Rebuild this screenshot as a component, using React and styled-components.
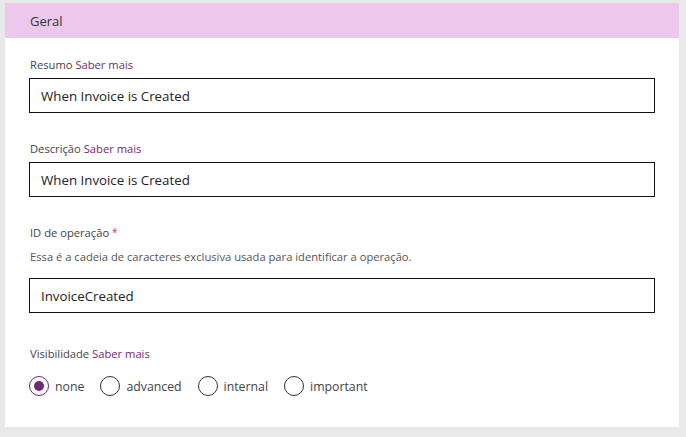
import styled, { createGlobalStyle } from "styled-components";

const GlobalStyle = createGlobalStyle`
  body {
    margin: 0;
    background: #e9e9e9;
    font-family: "Open Sans", "Noto Sans", sans-serif;
  }
`;

const Page = styled.div`
  padding: 3px 7px 10px 5px;
`;

const Card = styled.section`
  background: #fff;
  height: 424px;
  box-sizing: border-box;
`;

const Header = styled.div`
  height: 35px;
  background: #ecc8ec;
  display: flex;
  align-items: center;
  padding-left: 25px;
  font-size: 13px;
  color: #333;
`;

const Body = styled.div`
  padding: 19px 24px 0 24px;
  display: flex;
  flex-direction: column;
`;

const Field = styled.div`
  display: flex;
  flex-direction: column;
  margin-top: ${(p) => p.$top || 0}px;
`;

const Label = styled.div`
  font-size: 11.2px;
  line-height: 16px;
  color: #444;
  padding-left: 1px;
`;

const Link = styled.span`
  color: #742774;
`;

const Required = styled.span`
  color: #d13438;
  font-size: 10px;
  vertical-align: top;
  line-height: 14px;
`;

const Hint = styled.div`
  margin-top: 8px;
  font-size: 11.2px;
  line-height: 16px;
  color: #555;
  padding-left: 1px;
`;

const Input = styled.input`
  margin-top: ${(p) => p.$gap || 5}px;
  height: 35px;
  box-sizing: border-box;
  border: 1px solid #111;
  padding: 0 11px;
  font-family: inherit;
  font-size: 13.3px;
  color: #222;
  outline: none;
`;

const RadioGroup = styled.div`
  margin-top: 14px;
  display: flex;
  align-items: center;
  gap: 16px;
`;

const Option = styled.label`
  display: flex;
  align-items: center;
  gap: 6px;
  font-size: 12.3px;
  color: #444;
`;

const Circle = styled.span`
  width: 20px;
  height: 20px;
  box-sizing: border-box;
  border-radius: 50%;
  border: 1px solid ${(p) => (p.$checked ? "#742774" : "#333")};
  display: flex;
  align-items: center;
  justify-content: center;

  &::after {
    content: "";
    width: 10px;
    height: 10px;
    border-radius: 50%;
    background: ${(p) => (p.$checked ? "#742774" : "transparent")};
  }
`;

const visibility = ["none", "advanced", "internal", "important"];

export default function App() {
  return (
    <Page>
      <GlobalStyle />
      <Card>
        <Header>Geral</Header>
        <Body>
          <Field>
            <Label>
              Resumo <Link>Saber mais</Link>
            </Label>
            <Input defaultValue="When Invoice is Created" />
          </Field>
          <Field $top={28}>
            <Label>
              Descrição <Link>Saber mais</Link>
            </Label>
            <Input defaultValue="When Invoice is Created" />
          </Field>
          <Field $top={28}>
            <Label>
              ID de operação <Required>*</Required>
            </Label>
            <Hint>
              Essa é a cadeia de caracteres exclusiva usada para identificar a
              operação.
            </Hint>
            <Input $gap={13} defaultValue="InvoiceCreated" />
          </Field>
          <Field $top={33}>
            <Label>
              Visibilidade <Link>Saber mais</Link>
            </Label>
            <RadioGroup>
              {visibility.map((v) => (
                <Option key={v}>
                  <Circle $checked={v === "none"} />
                  {v}
                </Option>
              ))}
            </RadioGroup>
          </Field>
        </Body>
      </Card>
    </Page>
  );
}
